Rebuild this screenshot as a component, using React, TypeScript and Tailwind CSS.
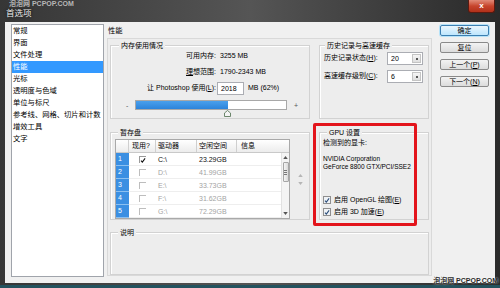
import React from "react";

const listItems = [
  "常规",
  "界面",
  "文件处理",
  "性能",
  "光标",
  "透明度与色域",
  "单位与标尺",
  "参考线、网格、切片和计数",
  "增效工具",
  "文字",
];

const drives = [
  { n: 1, on: true, drive: "C:\\", free: "23.29GB" },
  { n: 2, on: false, drive: "D:\\", free: "41.99GB" },
  { n: 3, on: false, drive: "E:\\", free: "33.73GB" },
  { n: 4, on: false, drive: "F:\\", free: "31.62GB" },
  { n: 5, on: false, drive: "G:\\", free: "72.29GB" },
];

const Acc = ({ c }: { c: string }) => <span className="underline">{c}</span>;

const GroupBox = ({
  title,
  className,
  labelLeft,
  children,
}: {
  title: string;
  className: string;
  labelLeft: string;
  children?: React.ReactNode;
}) => (
  <div
    className={`relative border border-[#d2d2d2] shadow-[inset_1px_1px_0_#ffffff] ${className}`}
  >
    <span
      className={`absolute top-[-6px] ${labelLeft} bg-[#ededed] px-[2px] leading-[11px]`}
    >
      {title}
    </span>
    {children}
  </div>
);

const CheckMark = ({ color }: { color: string }) => (
  <svg viewBox="0 0 8 8" className="w-[7px] h-[7px]">
    <path
      d="M1.3 4.2 L3.1 6.2 L6.8 1.2"
      stroke={color}
      strokeWidth="1.4"
      fill="none"
    />
  </svg>
);

const Select = ({ value }: { value: string }) => (
  <div className="flex h-[13px] w-[36px] border border-[#abadb3] bg-white">
    <span className="flex-1 pl-[3px] leading-[11px]">{value}</span>
    <span className="m-[1px] flex w-[9px] items-center justify-center border border-[#c4c4c4] bg-gradient-to-b from-[#f6f6f6] to-[#dedede]">
      <span className="h-[2px] w-[2px] bg-[#555]" />
    </span>
  </div>
);

const Btn = ({
  children,
  primary,
}: {
  children: React.ReactNode;
  primary?: boolean;
}) => (
  <div
    className={`flex h-[11px] items-center justify-center rounded-[2px] border leading-none ${
      primary
        ? "border-[#3c7fb1] bg-gradient-to-b from-[#eaf6fd] to-[#bee6fd] shadow-[0_0_0_1px_#b6e2f8]"
        : "border-[#8a8a8a] bg-gradient-to-b from-[#f3f3f3] to-[#dcdcdc]"
    }`}
  >
    {children}
  </div>
);

const Tri = ({ up, color }: { up?: boolean; color: string }) => (
  <svg viewBox="0 0 6 4" className="w-[5px] h-[3px]">
    <path d={up ? "M0 4 L3 0 L6 4 Z" : "M0 0 L6 0 L3 4 Z"} fill={color} />
  </svg>
);

const App: React.FC = () => {
  return (
    <div className="relative h-[288px] w-[500px] overflow-hidden bg-[#24525e] font-['Liberation_Sans','Noto_Sans_CJK_SC',sans-serif] text-[7px] text-black">
      {/* window frame */}
      <div className="flex h-[285px] flex-col bg-gradient-to-r from-[#363636] via-[#555555] to-[#2a2a2a] px-[5px] pb-[2px]">
        {/* title bar */}
        <div className="relative flex h-[22px] items-start">
          <span className="mt-[8px] pl-[1px] text-[8.5px] leading-[10px] text-[#eeeeee] [text-shadow:0_0_3px_#000]">
            首选项
          </span>
          <div className="ml-auto flex h-[13px] w-[27px] items-center justify-center rounded-b-[3px] border border-t-0 border-[#5a1a10] bg-gradient-to-b from-[#e08a78] via-[#c7442c] to-[#b1301a]">
            <span className="text-[8px] font-bold leading-none text-white">x</span>
          </div>
        </div>

        {/* dialog body */}
        <div className="flex flex-1 bg-[#f0f0f0] px-[6px] pt-[2px] pb-[6px]">
          {/* category list */}
          <div className="w-[93px] border border-[#a0a4ab] bg-white text-[7.3px]">
            {listItems.map((item) => (
              <div
                key={item}
                className={`h-[12px] pl-[1px] leading-[12px] ${
                  item === "性能" ? "bg-[#3399ff] text-white" : ""
                }`}
              >
                {item}
              </div>
            ))}
          </div>

          {/* main column */}
          <div className="ml-[3px] flex w-[325px] flex-col">
            <div className="h-[14px] pl-[1px] text-[7.3px] leading-[14px]">性能</div>
            <div className="flex h-[238px] flex-col border border-[#d9d9d9] bg-[#ededed] px-[2px] pt-[6px]">
              {/* row 1 */}
              <div className="flex gap-[9px]">
                <GroupBox title="内存使用情况" className="h-[74px] w-[200px]" labelLeft="left-[8px]">
                  <div className="pt-[2px]">
                    <div className="flex h-[16px] items-center">
                      <span className="w-[105px] text-right">可用内存:</span>
                      <span className="pl-[4px]">3255 MB</span>
                    </div>
                    <div className="flex h-[16px] items-center">
                      <span className="w-[105px] text-right">
                        <span className="underline">理</span>想范围:
                      </span>
                      <span className="pl-[4px]">1790-2343 MB</span>
                    </div>
                    <div className="flex h-[16px] items-center">
                      <span className="w-[105px] text-right">
                        让 Photoshop 使用(<Acc c="L" />):
                      </span>
                      <span className="ml-[1px] h-[13px] w-[27px] border border-[#abadb3] bg-white pl-[3px] leading-[11px]">
                        2018
                      </span>
                      <span className="pl-[4px]">MB (62%)</span>
                    </div>
                    <div className="mt-[4px] flex h-[10px] items-center">
                      <span className="ml-[15px] w-[5px] leading-none text-[#555]">-</span>
                      <div className="relative ml-[4px] h-[10px] w-[152px] border border-[#a8a8a8] bg-white">
                        <div className="h-full w-[92px] bg-gradient-to-b from-[#4aa0ec] to-[#2c84db]" />
                        <svg
                          viewBox="0 0 7 7"
                          className="absolute left-[88px] top-[9px] h-[7px] w-[7px]"
                        >
                          <path
                            d="M3.5 0.5 L6.5 3 L6.5 6.5 L0.5 6.5 L0.5 3 Z"
                            fill="#f4f4f4"
                            stroke="#5e7a5e"
                            strokeWidth="0.9"
                          />
                        </svg>
                      </div>
                      <span className="ml-[7px] leading-none text-[#555]">+</span>
                    </div>
                  </div>
                </GroupBox>

                <GroupBox title="历史记录与高速缓存" className="h-[74px] w-[110px]" labelLeft="left-[5px]">
                  <div className="flex flex-col gap-[5px] pl-[4px] pt-[6px]">
                    <div className="flex h-[13px] items-center">
                      <span className="w-[63px]">
                        历史记录状态(<Acc c="H" />):
                      </span>
                      <Select value="20" />
                    </div>
                    <div className="flex h-[13px] items-center">
                      <span className="w-[63px]">
                        高速缓存级别(<Acc c="C" />):
                      </span>
                      <Select value="6" />
                    </div>
                  </div>
                </GroupBox>
              </div>

              {/* row 2 */}
              <div className="mt-[13px] flex gap-[9px]">
                <GroupBox title="暂存盘" className="h-[88px] w-[200px]" labelLeft="left-[7px]">
                  <div className="ml-[4px] mt-[6px] flex">
                    <div className="w-[175px] border border-[#a9a9a9] bg-white">
                      <div className="grid h-[13px] grid-cols-[13px_27px_41px_40px_1fr] border-b border-[#c9c9c9] bg-gradient-to-b from-[#ffffff] to-[#ececec] leading-[12px]">
                        <span className="border-r border-[#cfcfcf]" />
                        <span className="border-r border-[#cfcfcf] pl-[3px]">现用?</span>
                        <span className="border-r border-[#cfcfcf] pl-[2px]">驱动器</span>
                        <span className="border-r border-[#cfcfcf] pl-[2px]">空闲空间</span>
                        <span className="pl-[4px]">信息</span>
                      </div>
                      <div className="flex">
                        <div className="w-[165px]">
                          {drives.map((d) => (
                            <div
                              key={d.n}
                              className={`grid h-[13px] grid-cols-[13px_27px_41px_40px_1fr] items-center border-b border-[#eeeeee] leading-[12px] ${
                                d.on ? "text-[#111]" : "text-[#a3a3a3]"
                              }`}
                            >
                              <span className="h-full border-b border-[#8cc0f0] bg-[#3b8fe2] pl-[2px] text-white">
                                {d.n}
                              </span>
                              <span className="pl-[10px]">
                                <span
                                  className={`flex h-[7px] w-[7px] items-center justify-center border-l border-t ${
                                    d.on ? "border-[#9a9a9a]" : "border-[#bdbdbd]"
                                  }`}
                                >
                                  {d.on && <CheckMark color="#111" />}
                                </span>
                              </span>
                              <span className="pl-[2px]">{d.drive}</span>
                              <span className="pl-[2px]">{d.free}</span>
                              <span />
                            </div>
                          ))}
                        </div>
                        <div className="flex w-[8px] flex-col items-center justify-between border-l border-[#e2e2e2] bg-[#f4f4f4] py-[3px]">
                          <Tri up color="#555" />
                          <div className="mb-auto mt-[3px] flex h-[20px] w-[6px] flex-col items-center justify-center gap-[1px] rounded-[1px] border border-[#a5a5a5] bg-gradient-to-r from-[#f4f4f4] to-[#d9d9d9]">
                            <span className="h-px w-[3px] bg-[#777]" />
                            <span className="h-px w-[3px] bg-[#777]" />
                            <span className="h-px w-[3px] bg-[#777]" />
                          </div>
                          <Tri color="#555" />
                        </div>
                      </div>
                    </div>
                    <div className="ml-[8px] flex flex-col justify-center gap-[5px]">
                      <Tri up color="#b5b5b5" />
                      <Tri color="#b5b5b5" />
                    </div>
                  </div>
                </GroupBox>

                <GroupBox title="GPU 设置" className="h-[88px] w-[110px]" labelLeft="left-[7px]">
                  <div className="pl-[3px] pt-[4px]">
                    <div className="h-[12px] leading-[12px]">检测到的显卡:</div>
                    <div className="mt-[6px] text-[6.5px] leading-[8px]">
                      <div>NVIDIA Corporation</div>
                      <div>GeForce 8800 GTX/PCI/SSE2</div>
                    </div>
                    <div className="mt-[23px] flex h-[12px] items-center gap-[3px]">
                      <span className="flex h-[8px] w-[8px] items-center justify-center border border-[#8f8f8f] bg-[#eef2f6]">
                        <CheckMark color="#2c4d7a" />
                      </span>
                      <span>
                        启用 OpenGL 绘图(<Acc c="E" />)
                      </span>
                    </div>
                    <div className="flex h-[12px] items-center gap-[3px]">
                      <span className="flex h-[8px] w-[8px] items-center justify-center border border-[#8f8f8f] bg-[#eef2f6]">
                        <CheckMark color="#2c4d7a" />
                      </span>
                      <span>
                        启用 3D 加速(<Acc c="E" />)
                      </span>
                    </div>
                  </div>
                </GroupBox>
              </div>

              {/* description */}
              <GroupBox title="说明" className="mt-[12px] h-[43px] w-[319px]" labelLeft="left-[7px]" />
            </div>
          </div>

          {/* buttons */}
          <div className="ml-[8px] mt-[1px] flex w-[49px] flex-col gap-[6px]">
            <Btn primary>确定</Btn>
            <Btn>复位</Btn>
            <Btn>
              上一个(<Acc c="P" />)
            </Btn>
            <Btn>
              下一个(<Acc c="N" />)
            </Btn>
          </div>
        </div>
      </div>

      {/* highlight annotation */}
      <div className="pointer-events-none absolute left-[313px] top-[123px] h-[103px] w-[104px] rounded-[2px] border-[3px] border-[#e3141b]" />

      {/* watermarks */}
      <div className="pointer-events-none absolute left-[9px] top-0 text-[7px] font-bold leading-[8px] text-[#d8d8d8]/80">
        泡泡网 PCPOP.COM
      </div>
      <div className="pointer-events-none absolute bottom-[3px] right-[2px] text-[7px] font-bold leading-[8px] text-[#2a2a2a] [text-shadow:0_0_2px_#ffffff]">
        泡泡网 PCPOP.COM
      </div>
    </div>
  );
};

export default App;
